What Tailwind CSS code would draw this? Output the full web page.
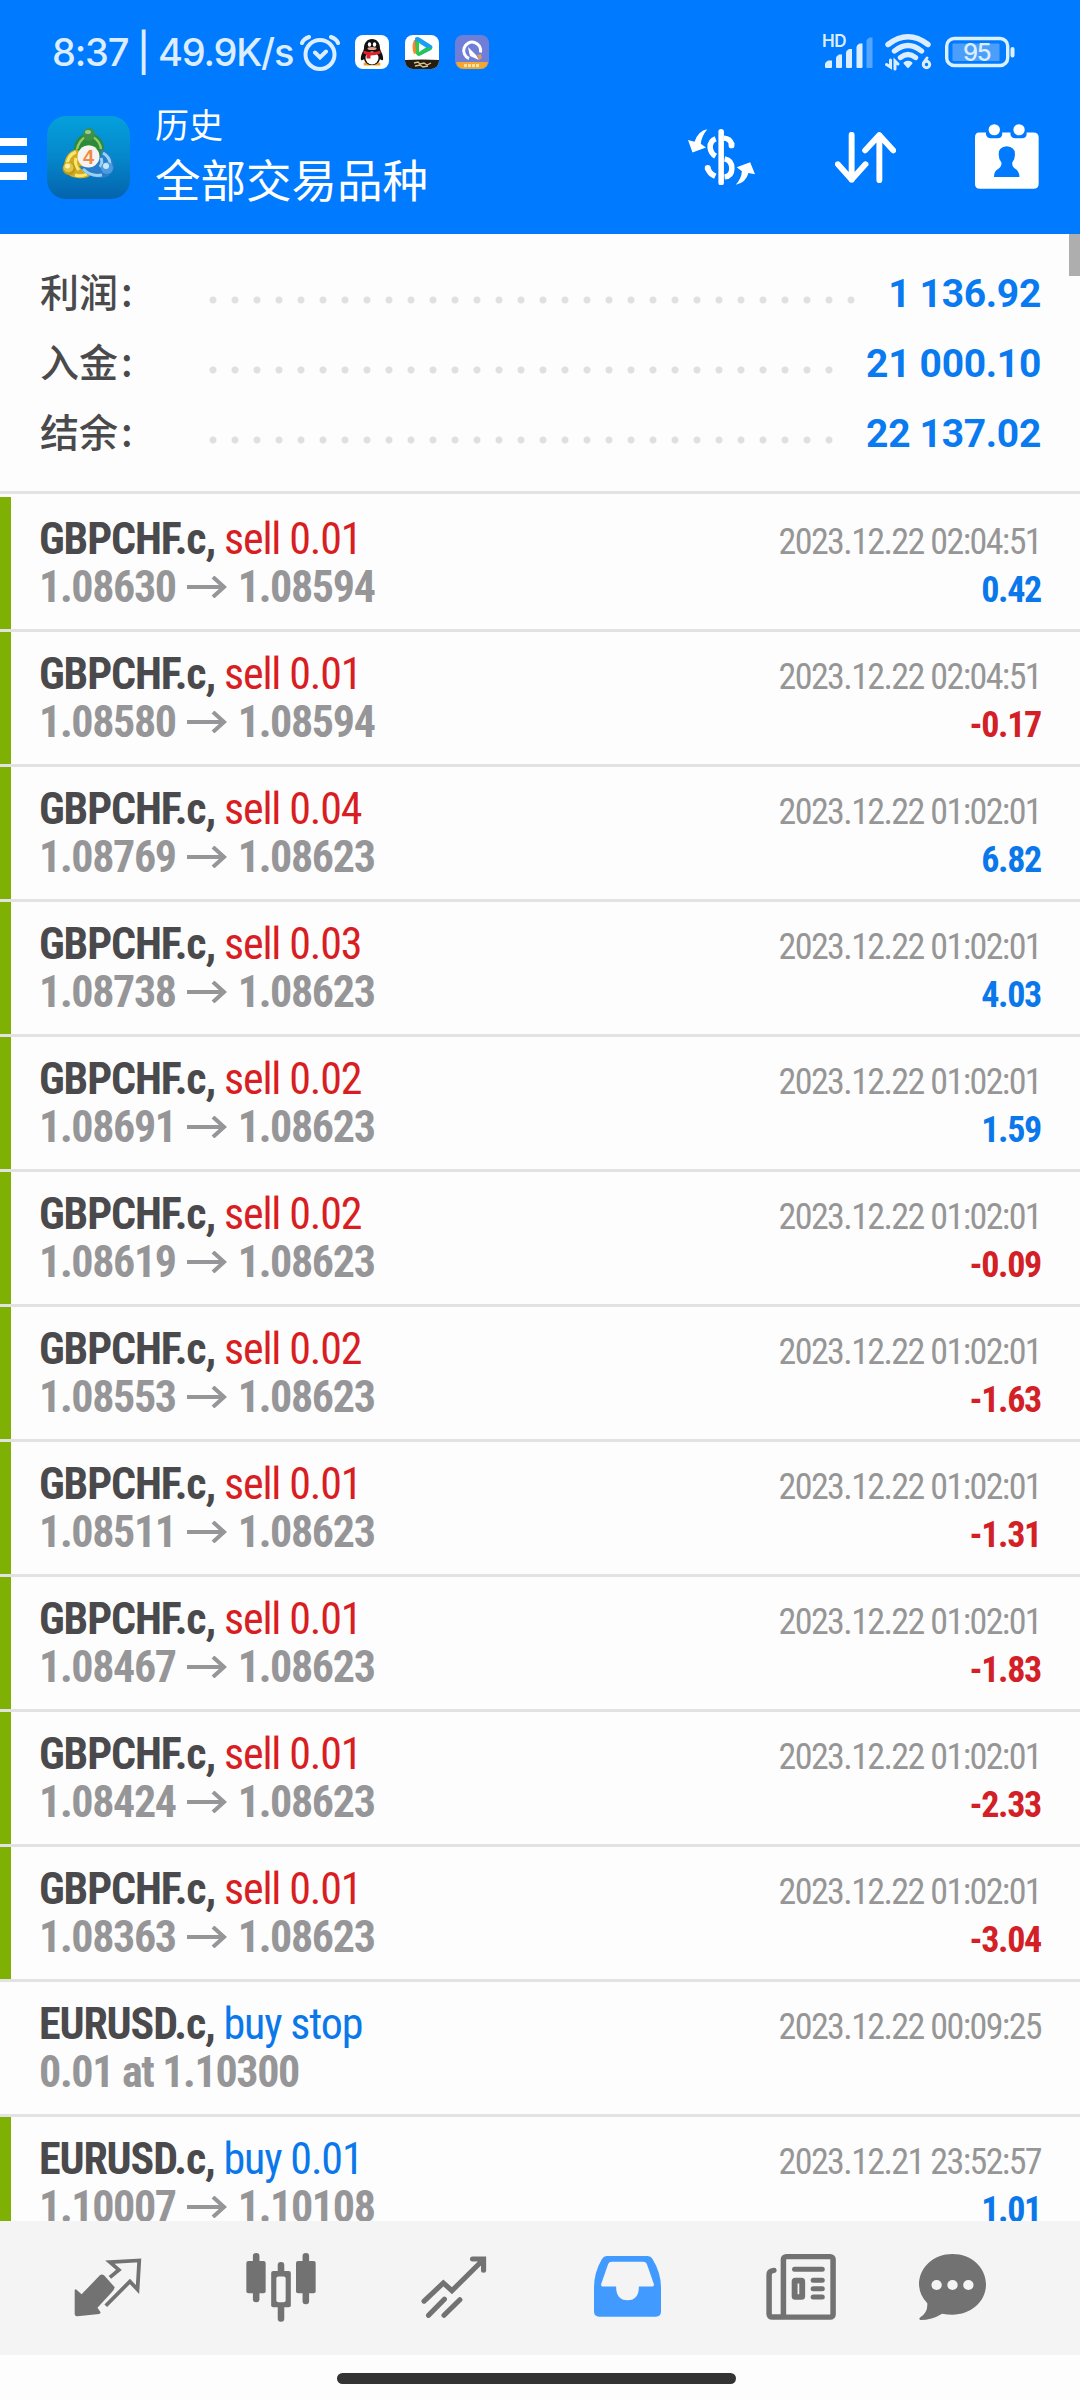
<!DOCTYPE html>
<html lang="zh-CN">
<head>
  <meta charset="UTF-8">
  <meta name="viewport" content="width=device-width, initial-scale=1.0">
  <title>历史</title>
  <script src="https://cdn.jsdelivr.net/npm/@tailwindcss/browser@4"></script>
</head>
<body class="bg-[#fdfdfd] font-['Roboto','Noto_Sans_CJK_SC',sans-serif]">
<div class="w-[1080px] h-[2400px] flex flex-col overflow-hidden">

  <header class="bg-[#007aff] h-[234px] shrink-0 text-white">
    <!-- status bar -->
    <div class="h-[104px] flex items-center pl-[52px] pr-[65px]">
      <div class="w-[248px] text-[38px] leading-[40px] tracking-[-1.2px] text-[#dcedff] whitespace-nowrap font-['Inter',sans-serif] font-medium">8:37 | 49.9K/s</div>
      <svg class="w-[40px] h-[37px]" viewBox="0 0 40 37" fill="none" stroke="#dcedff" stroke-width="4" stroke-linecap="round">
        <circle cx="20" cy="20.500" r="14.500"/>
        <path d="M15 18.500l5 5 6-6M2 9c1-3 4-5 7-6M38 9c-1-3-4-5-7-6"/>
      </svg>
      <svg class="w-[34px] h-[34px] ml-[15px]" viewBox="0 0 34 34">
        <rect width="34" height="34" rx="8" fill="#fff"/>
        <path d="M10 29h14" stroke="#f0a020" stroke-width="3" stroke-linecap="round"/>
        <path d="M17 4c-5 0-8 4-8 9 0 3-4 7-3 12 1 1 3-1 3-1 1 4 4 6 8 6s7-2 8-6c0 0 2 2 3 1 1-5-3-9-3-12 0-5-3-9-8-9z" fill="#111"/>
        <ellipse cx="17" cy="23" rx="6.500" ry="6.500" fill="#fff"/>
        <ellipse cx="14.500" cy="9.500" rx="1.700" ry="2.300" fill="#fff"/>
        <ellipse cx="19.500" cy="9.500" rx="1.700" ry="2.300" fill="#fff"/>
        <ellipse cx="17" cy="13.500" rx="4.500" ry="1.500" fill="#e8a48a"/>
        <path d="M8.500 15.500q8.500 3.500 17 0v3q-5 2-10 2v3h-4v-4l-3-1z" fill="#e0202a"/>
      </svg>
      <svg class="w-[34px] h-[34px] ml-[16px]" viewBox="0 0 34 34">
        <rect width="34" height="34" rx="8" fill="#fff"/>
        <path d="M0 25q17-1 34 0v1a8 8 0 0 1-8 8H8a8 8 0 0 1-8-8z" fill="#251d12"/>
        <path d="M9 28l4-1 2 2 4-1 3 2 4-2M10 31l5-1 3 2 5-1" stroke="#d9c28c" stroke-width="1.300" fill="none"/>
        <path d="M9 5q-3 7 0 14l4-1V5z" fill="#ff8a1c"/>
        <path d="M10 3q2-2 5 0l11 7q3 2 0 5l-10 5q-4 2-5-2z" fill="#17a0f2"/>
        <path d="M11 18q1 4 5 2l11-6-3-2-12 6z" fill="#20c94c"/>
        <path d="M11 6v12q2 2 6-1l-2-10z" fill="#35c84a"/>
        <path d="M14 8l7 4.500-7 4.500z" fill="#fff"/>
      </svg>
      <svg class="w-[34px] h-[34px] ml-[16px]" viewBox="0 0 34 34">
        <rect width="34" height="34" rx="8" fill="#6f7fd8"/>
        <path d="M1 27h32q-1 7-8 7H9q-7 0-8-7z" fill="#f0a832"/>
        <path d="M9 30.500h16" stroke="#ffe2a6" stroke-width="3" stroke-dasharray="3 1"/>
        <path d="M14 23.500a8.500 8.500 0 1 1 11.500-6" fill="none" stroke="#fff" stroke-width="3"/>
        <path d="M13 12l8 8 3 5-9-4-1-4z" fill="#fff"/>
        <path d="M22 20l4-1 1 4-3 2z" fill="#d89a62"/>
      </svg>
      <div class="ml-auto flex items-center">
        <div class="relative w-[50px] h-[34px]">
          <span class="absolute left-[-1px] top-[-2px] text-[17px] leading-[17px] tracking-[-0.5px] font-semibold text-[#dcedff] font-['Inter',sans-serif]">HD</span>
          <svg class="w-[50px] h-[34px]" viewBox="0 0 50 34" fill="#dcedff">
            <path d="M2 32v-3q0-2 3-3.500h4V32q0 1-1 1H3q-1 0-1-1zM13 32V23q0-2 3-3.500h3V32q0 1-1 1h-4q-1 0-1-1zM23 32V17.500q0-2 3-3.500h3V32q0 1-1 1h-4q-1 0-1-1zM33.500 32V12q0-2 3-3.500h3V32q0 1-1 1h-4q-1 0-1-1z"/>
            <path d="M43.500 32V6q0-2 3-3.500h3V32q0 1-1 1h-4q-1 0-1-1z" opacity=".38"/>
          </svg>
        </div>
        <svg class="w-[48px] h-[38px] ml-[11px]" viewBox="0 0 48 38" fill="none" stroke="#dcedff" stroke-width="5.400" stroke-linecap="round">
          <path d="M4 11.500q20-15.500 40 0M10.500 18q13.500-11 27 0M16.500 24.500q7.500-6 15 0"/>
          <path d="M20.500 30q3.500-2.500 7 0l-3.500 4z" fill="#dcedff" stroke-width="2" stroke-linejoin="round"/>
          <path d="M6.500 27v7l-4-2.500M11 36v-8l3 3" stroke-width="3"/>
          <circle cx="42.500" cy="31.500" r="3.200" stroke-width="3"/>
          <path d="M39.500 30l3.500-5" stroke-width="3"/>
        </svg>
        <svg class="w-[70px] h-[32px] ml-[13px]" viewBox="0 0 70 32">
          <rect x="1.700" y="2.500" width="61" height="27" rx="7.500" fill="none" stroke="#dcf1ff" stroke-width="3.400"/>
          <rect x="7.500" y="7.500" width="47" height="17.500" rx="1" fill="#4b9ffb"/>
          <rect x="65.500" y="11" width="4" height="10.500" rx="2" fill="#dcf1ff"/>
          <text x="31.500" y="25" text-anchor="middle" font-family="Inter" font-size="24" font-weight="500" letter-spacing="-1.500" fill="#dcedff">95</text>
        </svg>
      </div>
    </div>

    <!-- toolbar -->
    <div class="h-[130px] flex items-start">
      <div class="w-[27px] mt-[34px] flex flex-col gap-[9px]">
        <div class="h-[8px] bg-white"></div>
        <div class="h-[8px] bg-white"></div>
        <div class="h-[8px] bg-white"></div>
      </div>
      <svg class="w-[83px] h-[83px] ml-[20px] mt-[12px]" viewBox="0 0 83 83">
        <defs>
          <linearGradient id="appBg" x1="0" y1="0" x2="0" y2="1">
            <stop offset="0" stop-color="#04a0dc"/>
            <stop offset=".5" stop-color="#0587cb"/>
            <stop offset="1" stop-color="#0463ad"/>
          </linearGradient>
        </defs>
        <rect width="83" height="83" rx="19" fill="url(#appBg)"/>
        <path d="M27 36q-1-13 10-18h10q11 5 10 18-2 6-15 5-13 1-15-5z" fill="#2c8a3a"/>
        <path d="M30 33q2-8 8-12M46 21q7 4 8 12M35 33q7-5 14 0" fill="none" stroke="#93cb68" stroke-width="2.500"/>
        <path d="M30 33q-12 3-13 17 1 11 14 12 8 1 13-3L35 39z" fill="#d2ab1e"/>
        <path d="M29 36q-8 3-9 13M28 59q6 2 12-1M29 42q-2 7 3 12" fill="none" stroke="#f8e873" stroke-width="3"/>
        <path d="M54 33q13 6 13 19-3 10-14 10-14-1-21-12l10 1 12-8z" fill="#2a7dca"/>
        <path d="M56 37q7 4 7 11M36 53q8 8 19 6M54 42q2 5-1 9" fill="none" stroke="#9ad2f5" stroke-width="3"/>
        <ellipse cx="42" cy="18.500" rx="6" ry="6.500" fill="#3f9148"/>
        <ellipse cx="41" cy="16" rx="3" ry="2" fill="#97cf8c"/>
        <circle cx="22" cy="52.500" r="6.500" fill="#b99a1c"/>
        <circle cx="21.500" cy="51.500" r="5" fill="#dfc548"/>
        <circle cx="20.500" cy="50" r="2.500" fill="#fbf1a4"/>
        <circle cx="60" cy="52" r="6" fill="#4b9be0"/>
        <circle cx="59" cy="50" r="3" fill="#c7e8fb"/>
        <circle cx="41.500" cy="40.500" r="11" fill="#f6f4f2"/>
        <text x="41.500" y="47.500" text-anchor="middle" font-family="Liberation Sans" font-size="20" font-weight="700" fill="#f08a48">4</text>
      </svg>
      <div class="ml-[25px] font-['Noto_Sans_CJK_SC',sans-serif]">
        <div class="text-[34px] leading-[40px]">历史</div>
        <div class="text-[45.500px] leading-[54px] mt-[7px]">全部交易品种</div>
      </div>
      <svg class="w-[67px] h-[56px] ml-auto mt-[25px]" viewBox="432 387 194 167" preserveAspectRatio="none" fill="none" stroke="#fff" stroke-linecap="round">
        <path d="M528 395v152" stroke-width="16"/>
        <path d="M536 414q18 1 23 19M512 416q-16 6-16 26 2 18 16 26M538 476q21 4 21 28t-21 26M489 502q4 18 22 26" stroke-width="16" stroke-linecap="butt"/>
        <path d="M558 433v3M489 503v1" stroke-width="17"/>
        <path d="M488 388q-26 4-37 37l-19-5 13 37 39-15-15-11q2-22 19-43zM570 553q30-6 37-35l19 4-14-36-39 15 15 12q-1 22-18 40z" fill="#fff" stroke="none"/>
      </svg>
      <svg class="w-[61px] h-[51px] ml-[80px] mt-[28px]" viewBox="856 395 176 152" preserveAspectRatio="none" fill="none" stroke="#fff" stroke-width="17" stroke-linecap="round" stroke-linejoin="round">
        <path d="M904 403v134M864 491l40 46 40-46M984 539V404M943 450l41-46 40 46"/>
      </svg>
      <svg class="w-[64px] h-[65px] ml-[79px] mr-[41px] mt-[20px]" viewBox="1263 371 186 193" preserveAspectRatio="none" fill="#fff">
        <path d="M1275 396h20v6q2 11 14 11h20q12 0 13-11v-6h24v6q2 11 14 11h20q12 0 13-11v-6h20q15 0 15 14v139q0 14-15 14H1277q-14 0-14-14V410q0-14 12-14z"/>
        <circle cx="1319" cy="388" r="16.500"/>
        <circle cx="1391" cy="388" r="16.500"/>
        <path d="M1355 437q24 2 24 22 1 16-8 27 0 13 8 17 13 7 13 25h-74q0-18 14-25 8-4 8-17-9-11-8-27 0-20 23-22z" fill="#007aff"/>
      </svg>
    </div>
  </header>

  <main class="h-[1987px] shrink-0 overflow-hidden relative">
    <div class="absolute right-0 top-0 w-[11px] h-[42px] bg-[#aeaeae]"></div>

    <section id="summary" class="h-[260px] pt-[21px] pl-[40px] pr-[39px] border-b-3 border-[#e2e2e2]"></section>
    <section id="deals" class="pt-[3px]"></section>
  </main>

  <nav class="h-[134px] shrink-0 bg-[#f4f4f4] flex pl-[21px]">
    <div class="w-[173px] flex justify-center pt-[36px]">
      <svg class="w-[68px] h-[60px]" viewBox="216 236 197 177" preserveAspectRatio="none">
        <path d="M291 290q6-5 12 0l31 35q-2 8-8 14l-42 47 9 13q0 4-4 5l-63 7q-8 1-8-8v-70q3-4 6 0l14 13z" fill="#727272"/>
        <path d="M320 296l26-22-26-23 85-5-5 86-22-24-70 72" fill="none" stroke="#727272" stroke-width="11"/>
      </svg>
    </div>
    <div class="w-[173px] flex justify-center pt-[32px]">
      <svg class="w-[70px] h-[69px]" viewBox="715 222 203 206" preserveAspectRatio="none" fill="#727272">
        <rect x="716" y="246" width="56" height="96" rx="6"/>
        <rect x="735" y="222" width="19" height="147" rx="9"/>
        <rect x="860" y="246" width="57" height="96" rx="6"/>
        <rect x="879" y="222" width="19" height="153" rx="9"/>
        <rect x="788" y="276" width="57" height="108" rx="6"/>
        <rect x="807" y="249" width="19" height="178" rx="9"/>
        <rect x="803" y="292" width="27" height="77" rx="6" fill="#f4f4f4"/>
      </svg>
    </div>
    <div class="w-[174px] flex justify-center pt-[35px]">
      <svg class="w-[66px] h-[62px]" viewBox="1223 229 192 184" preserveAspectRatio="none" fill="none" stroke="#727272" stroke-width="15" stroke-linecap="round">
        <path d="M1232 363l56-54 25 23 91-92M1373 238h32v33M1245 405l46-48M1290 405l46-46"/>
      </svg>
    </div>
    <div class="w-[173px] flex justify-center pt-[35px]">
      <svg class="w-[67px] h-[61px]" viewBox="157 230 194 182" preserveAspectRatio="none" fill="#419aff" fill-rule="evenodd">
        <path d="M194 230h118q10 0 14 8 25 42 25 85v72q0 16-15 16H172q-15 0-15-16v-72q0-43 23-84 5-9 14-9zM208 247q-7 0-10 7l-20 59q-2 8 5 8h38q0 41 33 41t33-41h38q7 0 5-8l-20-59q-3-7-10-7z"/>
      </svg>
    </div>
    <div class="w-[173px] flex justify-center pt-[33px]">
      <svg class="w-[70px] h-[66px]" viewBox="656 222 203 198" preserveAspectRatio="none" fill="none" stroke="#727272" stroke-width="16" stroke-linecap="round">
        <rect x="706.500" y="230" width="144" height="181.500" rx="8"/>
        <path d="M706 411h-31q-10 0-10-10V284q0-12 14-13"/>
        <path d="M739 268h80M793 301h26M793 326h26M793 351h26" stroke-width="15"/>
        <rect x="739" y="302" width="22" height="49" rx="2" stroke-width="17"/>
      </svg>
    </div>
    <div class="w-[131px] flex justify-center pt-[33px]">
      <svg class="w-[67px] h-[66px]" viewBox="1102 222 194 198" preserveAspectRatio="none" fill="#727272">
        <path d="M1199 222c54 0 97 40 97 91 0 52-44 91-97 91q-15 0-30-3-30 19-63 19-6-4 0-8 22-15 20-42-23-25-24-57c0-51 43-91 97-91z"/>
        <g fill="#f4f4f4">
          <circle cx="1153" cy="315" r="15"/>
          <circle cx="1199" cy="315" r="15"/>
          <circle cx="1245" cy="315" r="15"/>
        </g>
      </svg>
    </div>
  </nav>

  <!-- gesture bar -->
  <div class="flex justify-center pt-[18px] pr-[7px]">
    <div class="w-[399px] h-[11px] rounded-full bg-[#333]"></div>
  </div>
</div>

<script>
  const summary = [
    ["利润", "1 136.92", 660],
    ["入金", "21 000.10", 638],
    ["结余", "22 137.02", 638],
  ];

  const deals = [
    ["GBPCHF.c", "sell 0.01", "1.08630", "1.08594", "2023.12.22 02:04:51", "0.42"],
    ["GBPCHF.c", "sell 0.01", "1.08580", "1.08594", "2023.12.22 02:04:51", "-0.17"],
    ["GBPCHF.c", "sell 0.04", "1.08769", "1.08623", "2023.12.22 01:02:01", "6.82"],
    ["GBPCHF.c", "sell 0.03", "1.08738", "1.08623", "2023.12.22 01:02:01", "4.03"],
    ["GBPCHF.c", "sell 0.02", "1.08691", "1.08623", "2023.12.22 01:02:01", "1.59"],
    ["GBPCHF.c", "sell 0.02", "1.08619", "1.08623", "2023.12.22 01:02:01", "-0.09"],
    ["GBPCHF.c", "sell 0.02", "1.08553", "1.08623", "2023.12.22 01:02:01", "-1.63"],
    ["GBPCHF.c", "sell 0.01", "1.08511", "1.08623", "2023.12.22 01:02:01", "-1.31"],
    ["GBPCHF.c", "sell 0.01", "1.08467", "1.08623", "2023.12.22 01:02:01", "-1.83"],
    ["GBPCHF.c", "sell 0.01", "1.08424", "1.08623", "2023.12.22 01:02:01", "-2.33"],
    ["GBPCHF.c", "sell 0.01", "1.08363", "1.08623", "2023.12.22 01:02:01", "-3.04"],
    ["EURUSD.c", "buy stop", "0.01 at 1.10300", "", "2023.12.22 00:09:25", ""],
    ["EURUSD.c", "buy 0.01", "1.10007", "1.10108", "2023.12.21 23:52:57", "1.01"],
  ];

  const arrow = `<svg class="w-[40px] h-[22px] ml-[11px] mr-[11px]" viewBox="0 0 40 22" fill="none" stroke="#969698" stroke-width="4"><path d="M0 11h38M26 1l11 10-11 10"/></svg>`;

  document.getElementById("summary").innerHTML = summary.map(([label, value, dots]) => `
    <div class="h-[70px] flex items-center">
      <div class="w-[170px] text-[39px] leading-[70px] font-medium text-[#4a4a4c] font-['Noto_Sans_CJK_SC',sans-serif]">${label}<span class="ml-[3px]">:</span></div>
      <div class="h-[8px] mt-[20px] -ml-[8px] bg-repeat-x bg-[length:22px_8px] bg-[radial-gradient(circle,#e0e0e0_3px,transparent_4px)]" style="width:${dots}px"></div>
      <div class="ml-auto mt-[8px] text-[39px] leading-[70px] tracking-[-0.3px] font-bold text-[#0a7af0] whitespace-nowrap">${value}</div>
    </div>`).join("");

  document.getElementById("deals").innerHTML = deals.map(([symbol, action, open, close, time, profit]) => `
    <div class="h-[135px] flex border-b-3 border-[#e2e2e2]">
      <div class="w-[11px] ${close ? "bg-[#7fb004]" : ""}"></div>
      <div class="flex-1 pt-[18px] pl-[28px] pr-[39px] font-['Roboto_Condensed','Roboto',sans-serif] font-stretch-condensed whitespace-nowrap">
        <div class="h-[48px] flex justify-between items-baseline text-[44px] leading-[48px] tracking-[-1.15px]">
          <div><span class="font-bold text-[#4a4a4d]">${symbol},</span> <span class="${action.startsWith("sell") ? "text-[#d81e22]" : "text-[#0a78ea]"}">${action}</span></div>
          <div class="text-[36px] leading-[36px] tracking-[-1.6px] text-[#969696]">${time}</div>
        </div>
        <div class="h-[48px] flex justify-between items-baseline text-[44px] leading-[48px] tracking-[-1.35px] font-bold">
          <div class="flex items-center text-[#969698]">${open}${close ? arrow + close : ""}</div>
          <div class="text-[36px] leading-[36px] tracking-[-1.3px] ${profit.startsWith("-") ? "text-[#d22026]" : "text-[#0a78ea]"}">${profit}</div>
        </div>
      </div>
    </div>`).join("");
</script>
</body>
</html>
